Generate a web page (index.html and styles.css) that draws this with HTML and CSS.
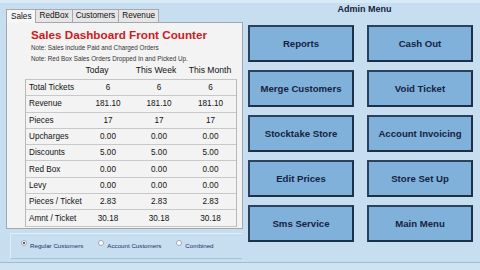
FILE: index.html
```html
<!DOCTYPE html>
<html>
<head>
<meta charset="utf-8">
<link rel="stylesheet" href="styles.css">
</head>
<body>
<div class="main">
  <div class="left">
    <div class="tabs">
      <div class="tab active">Sales</div>
      <div class="tab">RedBox</div>
      <div class="tab">Customers</div>
      <div class="tab">Revenue</div>
    </div>
    <div class="panel">
      <div class="title">Sales Dashboard Front Counter</div>
      <div class="note">Note: Sales include Paid and Charged Orders</div>
      <div class="note">Note: Red Box Sales Orders Dropped In and Picked Up.</div>
      <div class="heads">
        <span class="h1">Today</span>
        <span class="h2">This Week</span>
        <span class="h3">This Month</span>
      </div>
      <div class="table">
        <div class="row"><span class="lbl">Total Tickets</span><span>6</span><span>6</span><span>6</span></div>
        <div class="row"><span class="lbl">Revenue</span><span>181.10</span><span>181.10</span><span>181.10</span></div>
        <div class="row"><span class="lbl">Pieces</span><span>17</span><span>17</span><span>17</span></div>
        <div class="row"><span class="lbl">Upcharges</span><span>0.00</span><span>0.00</span><span>0.00</span></div>
        <div class="row"><span class="lbl">Discounts</span><span>5.00</span><span>5.00</span><span>5.00</span></div>
        <div class="row"><span class="lbl">Red Box</span><span>0.00</span><span>0.00</span><span>0.00</span></div>
        <div class="row"><span class="lbl">Levy</span><span>0.00</span><span>0.00</span><span>0.00</span></div>
        <div class="row"><span class="lbl">Pieces / Ticket</span><span>2.83</span><span>2.83</span><span>2.83</span></div>
        <div class="row"><span class="lbl">Amnt / Ticket</span><span>30.18</span><span>30.18</span><span>30.18</span></div>
      </div>
    </div>
    <div class="radios">
      <label class="radio"><span class="dot on"></span>Regular Customers</label>
      <label class="radio"><span class="dot"></span>Account Customers</label>
      <label class="radio"><span class="dot"></span>Combined</label>
    </div>
  </div>
  <div class="right">
    <div class="admin">Admin Menu</div>
    <div class="grid">
      <div class="btn">Reports</div>
      <div class="btn">Cash Out</div>
      <div class="btn">Merge Customers</div>
      <div class="btn">Void Ticket</div>
      <div class="btn">Stocktake Store</div>
      <div class="btn">Account Invoicing</div>
      <div class="btn">Edit Prices</div>
      <div class="btn">Store Set Up</div>
      <div class="btn">Sms Service</div>
      <div class="btn">Main Menu</div>
    </div>
  </div>
</div>
<div class="footer"></div>
</body>
</html>
```
FILE: styles.css
```css
* { box-sizing: border-box; }
html, body { margin: 0; padding: 0; }
body {
  width: 480px;
  height: 270px;
  overflow: hidden;
  background: #c6def0;
  font-family: "Liberation Sans", Arial, sans-serif;
  border-top: 3px solid #d8eaf6;
}
.main {
  display: flex;
  height: 259px;
}
.left {
  width: 244px;
  display: flex;
  flex-direction: column;
}
.tabs {
  display: flex;
  margin: 5px 0 0 6px;
  height: 14px;
  align-items: flex-end;
}
.tab {
  font-size: 8.2px;
  height: 13px;
  line-height: 12px;
  padding: 0 3px;
  background: #e6e6e6;
  border: 1px solid #a9a9a9;
  border-bottom: none;
  color: #111;
  margin-right: -1px;
}
.tab.active {
  background: #f7f7f7;
  height: 14px;
  line-height: 13px;
  padding: 0 4px;
  position: relative;
  z-index: 1;
  margin-bottom: -1px;
}
.panel {
  margin-left: 6px;
  width: 237px;
  height: 207px;
  background: #f3f3f3;
  border: 1px solid #9fa8b0;
  padding: 3px 5px 0 18px;
}
.title {
  color: #cc1b22;
  font-weight: bold;
  font-size: 11.7px;
  margin: 2px 0 0 6px;
  height: 14px;
  line-height: 14px;
  white-space: nowrap;
}
.note {
  font-size: 6.3px;
  color: #333;
  margin-left: 6px;
  height: 11px;
  line-height: 11px;
}
.heads {
  position: relative;
  height: 15px;
  font-size: 8.6px;
  color: #111;
}
.heads span {
  position: absolute;
  top: 1px;
  transform: translateX(-50%);
  white-space: nowrap;
}
.heads .h1 { left: 72px; }
.heads .h2 { left: 131px; }
.heads .h3 { left: 185px; }
.table {
  width: 212px;
  border-top: 1px solid #c4c4c4;
  border-left: 1px solid #b8b8b8;
  border-right: 1px solid #b8b8b8;
}
.row {
  display: grid;
  grid-template-columns: 57px 50px 52px 1fr;
  height: 16.3px;
  border-bottom: 1px solid #c8c8c8;
  font-size: 8.2px;
  color: #111;
  align-items: center;
}
.row span { text-align: center; }
.row .lbl { text-align: left; padding-left: 3px; }
.radios {
  margin: 4px 2px 0 10px;
  height: 26px;
  border-top: 1px solid #e0eef8;
  border-left: 1px solid #e0eef8;
  border-bottom: 1px solid #a9c3d6;
  display: flex;
  align-items: center;
  padding: 0 0 2px 10px;
  gap: 15px;
  font-size: 6.2px;
  color: #1d2f5c;
}
.radio {
  display: flex;
  align-items: center;
  gap: 3px;
}
.dot {
  width: 6px;
  height: 6px;
  border-radius: 50%;
  background: #fff;
  border: 1px solid #a0a8b0;
  position: relative;
  top: -2px;
}
.dot.on::after {
  content: "";
  position: absolute;
  left: 1px;
  top: 1px;
  width: 2px;
  height: 2px;
  border-radius: 50%;
  background: #222;
}
.right {
  flex: 1;
  padding: 0 7px 0 4px;
}
.admin {
  text-align: center;
  font-weight: bold;
  font-size: 9px;
  color: #17223c;
  height: 22px;
  line-height: 12px;
  margin-left: 8px;
}
.grid {
  display: grid;
  grid-template-columns: 106px 106px;
  column-gap: 13px;
  grid-auto-rows: 37px;
  row-gap: 8px;
}
.btn {
  background: #7fb1db;
  border: 2px solid #1d3048;
  border-top-color: #2b415e;
  border-left-color: #2b415e;
  display: flex;
  align-items: center;
  justify-content: center;
  font-weight: bold;
  font-size: 9.6px;
  color: #16233f;
}
.footer {
  height: 8px;
  border-top: 1px solid #9ebcd2;
  background: #cfe4f3;
}
```
